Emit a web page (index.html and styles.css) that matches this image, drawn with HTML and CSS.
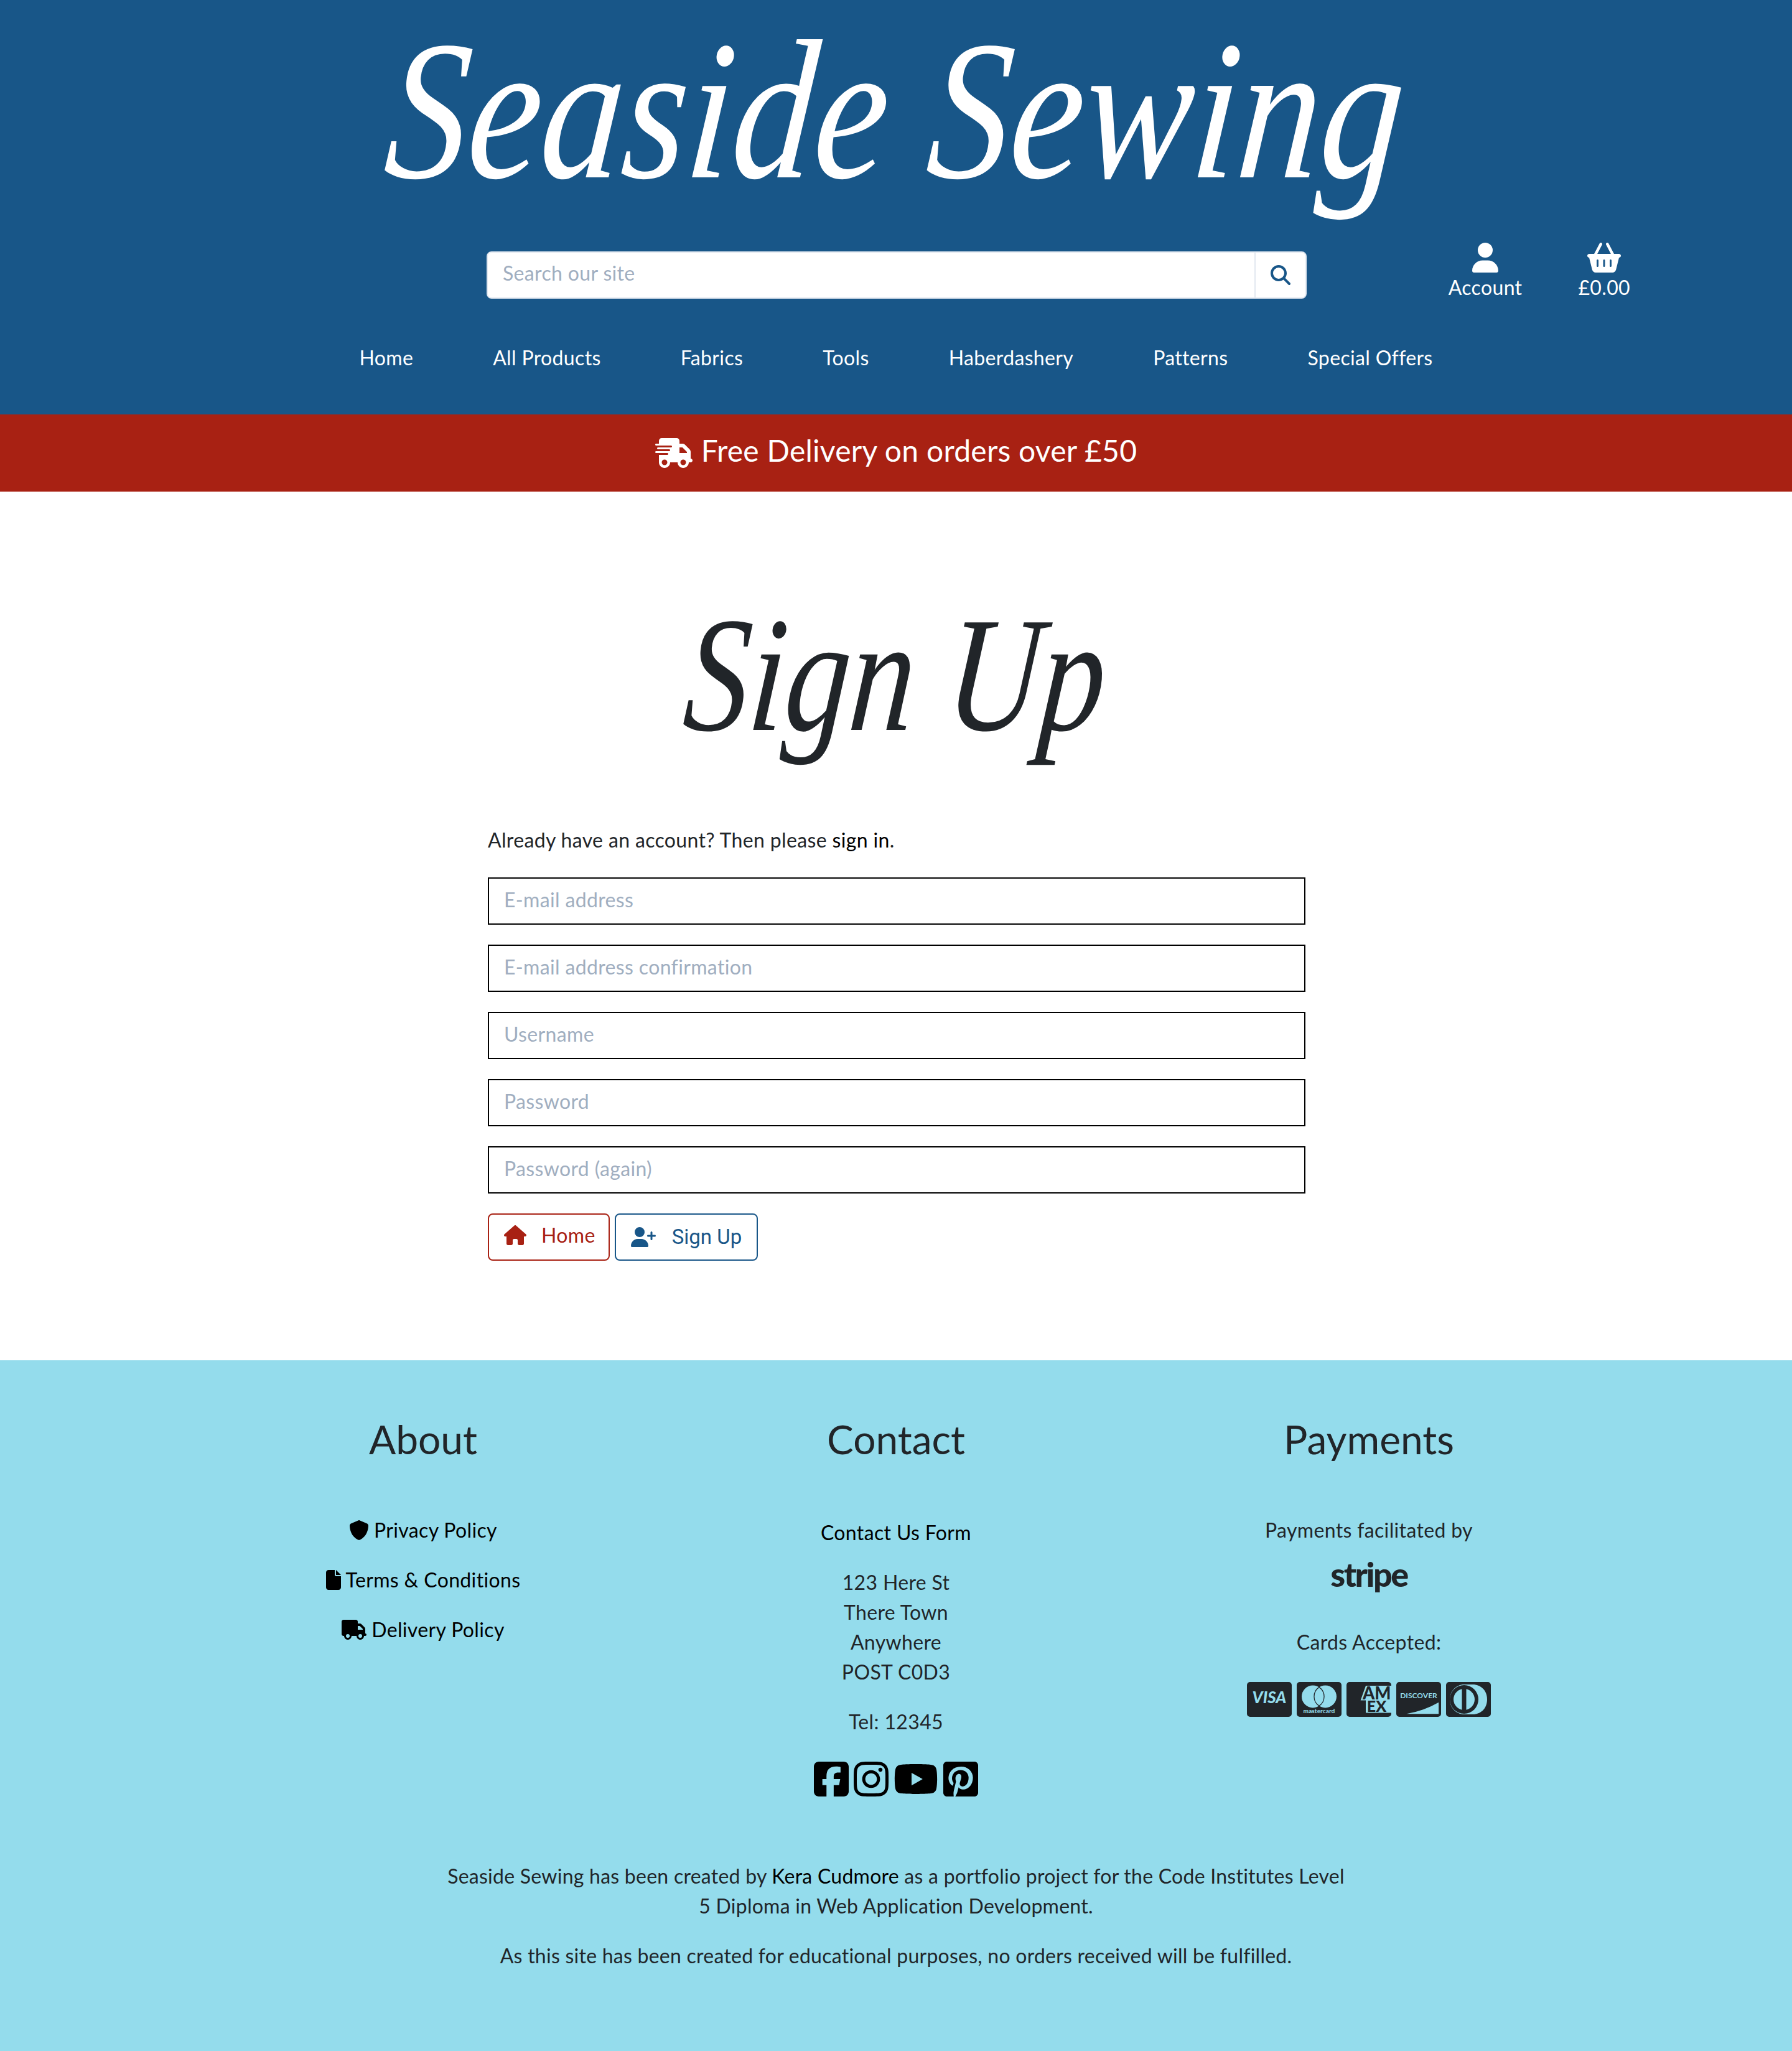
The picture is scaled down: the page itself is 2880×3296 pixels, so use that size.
FILE: index.html
```html
<!DOCTYPE html>
<html lang="en">

<head>
    <meta charset="UTF-8">
    <title>Seaside Sewing - Sign Up</title>
    <link rel="stylesheet" href="styles.css">
</head>

<body>
    <!-- icon sprite -->
    <svg class="sprite" width="0" height="0">
        <symbol id="i-search" viewBox="0 0 512 512"><path d="M416 208c0 45.9-14.9 88.3-40 122.7L502.6 457.4c12.5 12.5 12.5 32.8 0 45.3s-32.8 12.5-45.3 0L330.7 376c-34.4 25.2-76.8 40-122.7 40C93.1 416 0 322.9 0 208S93.1 0 208 0S416 93.1 416 208zM208 352a144 144 0 1 0 0-288 144 144 0 1 0 0 288z"/></symbol>
        <symbol id="i-user" viewBox="0 0 448 512"><path d="M224 256A128 128 0 1 0 224 0a128 128 0 1 0 0 256zm-45.7 48C79.8 304 0 383.8 0 482.3C0 498.7 13.3 512 29.7 512H418.3c16.4 0 29.7-13.3 29.7-29.7C448 383.8 368.2 304 269.7 304H178.3z"/></symbol>
        <symbol id="i-basket" viewBox="0 0 576 512"><path d="M253.3 35.1c6.1-11.8 1.5-26.3-10.2-32.4s-26.3-1.5-32.4 10.2L117.6 192H32c-17.7 0-32 14.3-32 32s14.3 32 32 32L83.9 463.5C91 492 116.6 512 146 512H430c29.4 0 55-20 62.1-48.5L544 256c17.7 0 32-14.3 32-32s-14.3-32-32-32H458.4L365.3 12.9C359.2 1.2 344.7-3.4 332.9 2.7s-16.3 20.6-10.2 32.4L404.3 192H171.7L253.3 35.1zM192 304v96c0 8.8-7.2 16-16 16s-16-7.2-16-16V304c0-8.8 7.2-16 16-16s16 7.2 16 16zm96-16c8.8 0 16 7.2 16 16v96c0 8.8-7.2 16-16 16s-16-7.2-16-16V304c0-8.8 7.2-16 16-16zm128 16v96c0 8.8-7.2 16-16 16s-16-7.2-16-16V304c0-8.8 7.2-16 16-16s16 7.2 16 16z"/></symbol>
        <symbol id="i-fast" viewBox="0 0 640 512"><path d="M112 0C85.5 0 64 21.5 64 48V96H16c-8.8 0-16 7.2-16 16s7.2 16 16 16H64 272c8.8 0 16 7.2 16 16s-7.2 16-16 16H64 48c-8.8 0-16 7.2-16 16s7.2 16 16 16H64 240c8.8 0 16 7.2 16 16s-7.2 16-16 16H64 16c-8.8 0-16 7.2-16 16s7.2 16 16 16H64 208c8.8 0 16 7.2 16 16s-7.2 16-16 16H64V416c0 53 43 96 96 96s96-43 96-96H384c0 53 43 96 96 96s96-43 96-96h32c17.7 0 32-14.3 32-32s-14.3-32-32-32V288 256 237.3c0-17-6.7-33.3-18.7-45.3L512 114.7c-12-12-28.3-18.7-45.3-18.7H416V48c0-26.5-21.5-48-48-48H112zM544 237.3V256H416V160h50.7L544 237.3zM160 368a48 48 0 1 1 0 96 48 48 0 1 1 0-96zm272 48a48 48 0 1 1 96 0 48 48 0 1 1 -96 0z"/></symbol>
        <symbol id="i-truck" viewBox="0 0 640 512"><path d="M48 0C21.5 0 0 21.5 0 48V368c0 26.5 21.5 48 48 48H64c0 53 43 96 96 96s96-43 96-96H384c0 53 43 96 96 96s96-43 96-96h32c17.7 0 32-14.3 32-32s-14.3-32-32-32V288 256 237.3c0-17-6.7-33.3-18.7-45.3L512 114.7c-12-12-28.3-18.7-45.3-18.7H416V48c0-26.5-21.5-48-48-48H48zM416 160h50.7L544 237.3V256H416V160zM112 416a48 48 0 1 1 96 0 48 48 0 1 1 -96 0zm368-48a48 48 0 1 1 0 96 48 48 0 1 1 0-96z"/></symbol>
        <symbol id="i-home" viewBox="0 0 576 512"><path d="M575.8 255.5c0 18-15 32.1-32 32.1h-32l.7 160.2c0 2.7-.2 5.4-.5 8.1V472c0 22.1-17.9 40-40 40H456c-1.1 0-2.2 0-3.3-.1c-1.4 .1-2.8 .1-4.2 .1H416 392c-22.1 0-40-17.9-40-40V448 384c0-17.7-14.3-32-32-32H256c-17.7 0-32 14.3-32 32v64 24c0 22.1-17.9 40-40 40H160 128.1c-1.5 0-3-.1-4.5-.2c-1.2 .1-2.4 .2-3.6 .2H104c-22.1 0-40-17.9-40-40V360c0-.9 0-1.9 .1-2.8V287.6H32c-18 0-32-14-32-32.1c0-9 3-17 10-24L266.4 8c7-7 15-8 22-8s15 2 21 7L564.8 231.5c8 7 12 15 11 24z"/></symbol>
        <symbol id="i-user-plus" viewBox="0 0 640 512"><path d="M96 128a128 128 0 1 1 256 0A128 128 0 1 1 96 128zM0 482.3C0 383.8 79.8 304 178.3 304h91.4C368.2 304 448 383.8 448 482.3c0 16.4-13.3 29.7-29.7 29.7H29.7C13.3 512 0 498.7 0 482.3zM504 312V248H440c-13.3 0-24-10.7-24-24s10.7-24 24-24h64V136c0-13.3 10.7-24 24-24s24 10.7 24 24v64h64c13.3 0 24 10.7 24 24s-10.7 24-24 24H552v64c0 13.3-10.7 24-24 24s-24-10.7-24-24z"/></symbol>
        <symbol id="i-shield" viewBox="0 0 512 512"><path d="M256 0c4.6 0 9.2 1 13.4 2.9L457.7 82.8c22 9.3 38.4 31 38.3 57.2c-.5 99.2-41.3 280.7-213.6 363.2c-16.7 8-36.1 8-52.8 0C57.3 420.7 16.5 239.2 16 140c-.1-26.2 16.3-47.9 38.3-57.2L242.7 2.9C246.8 1 251.4 0 256 0z"/></symbol>
        <symbol id="i-file" viewBox="0 0 384 512"><path d="M0 64C0 28.7 28.7 0 64 0H224V128c0 17.7 14.3 32 32 32H384V448c0 35.3-28.7 64-64 64H64c-35.3 0-64-28.7-64-64V64zm384 64H256V0L384 128z"/></symbol>
        <symbol id="i-facebook" viewBox="0 0 448 512"><path d="M64 32C28.7 32 0 60.7 0 96V416c0 35.3 28.7 64 64 64h98.2V334.2H109.4V256h52.8V222.3c0-87.1 39.4-127.5 125-127.5c16.2 0 44.2 3.2 55.7 6.4V172c-6-.6-16.5-1-29.6-1c-42 0-58.2 15.9-58.2 57.2V256h83.6l-14.4 78.2H255V480H384c35.3 0 64-28.7 64-64V96c0-35.3-28.7-64-64-64H64z"/></symbol>
        <symbol id="i-instagram" viewBox="0 0 448 512"><path d="M224.1 141c-63.6 0-114.9 51.3-114.9 114.9s51.3 114.9 114.9 114.9S339 319.5 339 255.9 287.7 141 224.1 141zm0 189.6c-41.1 0-74.7-33.5-74.7-74.7s33.5-74.7 74.7-74.7 74.7 33.5 74.7 74.7-33.6 74.7-74.7 74.7zm146.4-194.3c0 14.9-12 26.8-26.8 26.8-14.9 0-26.8-12-26.8-26.8s12-26.8 26.8-26.8 26.8 12 26.8 26.8zm76.1 27.2c-1.7-35.9-9.9-67.7-36.2-93.9-26.2-26.2-58-34.4-93.9-36.2-37-2.1-147.9-2.1-184.9 0-35.8 1.7-67.6 9.9-93.9 36.1s-34.4 58-36.2 93.9c-2.1 37-2.1 147.9 0 184.9 1.7 35.9 9.9 67.7 36.2 93.9s58 34.4 93.9 36.2c37 2.1 147.9 2.1 184.9 0 35.9-1.7 67.7-9.9 93.9-36.2 26.2-26.2 34.4-58 36.2-93.9 2.1-37 2.1-147.8 0-184.8zM398.8 388c-7.8 19.6-22.9 34.7-42.6 42.6-29.5 11.7-99.5 9-132.1 9s-102.7 2.6-132.1-9c-19.6-7.8-34.7-22.9-42.6-42.6-11.7-29.5-9-99.5-9-132.1s-2.6-102.7 9-132.1c7.8-19.6 22.9-34.7 42.6-42.6 29.5-11.7 99.5-9 132.1-9s102.7-2.6 132.1 9c19.6 7.8 34.7 22.9 42.6 42.6 11.7 29.5 9 99.5 9 132.1s2.7 102.7-9 132.1z"/></symbol>
        <symbol id="i-youtube" viewBox="0 0 576 512"><path d="M549.655 124.083c-6.281-23.65-24.787-42.276-48.284-48.597C458.781 64 288 64 288 64S117.22 64 74.629 75.486c-23.497 6.322-42.003 24.947-48.284 48.597-11.412 42.867-11.412 132.305-11.412 132.305s0 89.438 11.412 132.305c6.281 23.65 24.787 41.5 48.284 47.821C117.22 448 288 448 288 448s170.78 0 213.371-11.486c23.497-6.321 42.003-24.171 48.284-47.821 11.412-42.867 11.412-132.305 11.412-132.305s0-89.438-11.412-132.305zm-317.51 213.508V175.185l142.739 81.205-142.739 81.201z"/></symbol>
        <symbol id="i-pinterest" viewBox="0 0 448 512"><path d="M448 80v352c0 26.5-21.5 48-48 48H154.4c9.8-16.4 22.4-40 27.4-59.3 3-11.5 15.3-58.4 15.3-58.4 8 15.3 31.4 28.2 56.3 28.2 74.1 0 127.4-68.1 127.4-152.7 0-81.1-66.2-141.8-151.4-141.8-106 0-162.2 71.1-162.2 148.6 0 36 19.2 80.8 49.8 95.1 4.7 2.2 7.1 1.2 8.2-3.3.8-3.4 5-20.1 6.8-27.8.6-2.5.3-4.6-1.7-7-10.1-12.3-18.3-34.9-18.3-56 0-54.2 41-106.6 110.9-106.6 60.3 0 102.6 41.1 102.6 99.9 0 66.4-33.5 112.4-77.2 112.4-24.1 0-42.1-19.9-36.4-44.4 6.9-29.2 20.3-60.7 20.3-81.8 0-53-75.5-45.7-75.5 25 0 21.7 7.3 36.5 7.3 36.5-31.4 132.8-36.1 134.5-29.6 192.6l2.2.8H48c-26.5 0-48-21.5-48-48V80c0-26.5 21.5-48 48-48h352c26.5 0 48 21.5 48 48z"/></symbol>
    </svg>

    <header class="site-header">
        <h1 class="logo"><span class="script">Seaside Sewing</span></h1>
        <div class="search-row">
            <form class="search">
                <input class="search-input" type="text" placeholder="Search our site">
                <button class="search-btn" type="button">
                    <svg class="search-icon"><use href="#i-search"/></svg>
                </button>
            </form>
            <div class="header-links">
                <a class="header-link" href="#"><svg class="hl-icon user"><use href="#i-user"/></svg>Account</a>
                <a class="header-link" href="#"><svg class="hl-icon basket"><use href="#i-basket"/></svg>£0.00</a>
            </div>
        </div>
        <nav class="main-nav">
            <a href="#">Home</a>
            <a href="#">All Products</a>
            <a href="#">Fabrics</a>
            <a href="#">Tools</a>
            <a href="#">Haberdashery</a>
            <a href="#">Patterns</a>
            <a href="#">Special Offers</a>
        </nav>
    </header>

    <div class="banner">
        <svg class="banner-icon"><use href="#i-fast"/></svg>
        <span>Free Delivery on orders over £50</span>
    </div>

    <main class="signup">
        <h2 class="page-title"><span class="script">Sign Up</span></h2>
        <div class="signup-form">
            <p class="lead">Already have an account? Then please <a href="#">sign in</a>.</p>
            <input class="field" type="email" placeholder="E-mail address">
            <input class="field" type="email" placeholder="E-mail address confirmation">
            <input class="field" type="text" placeholder="Username">
            <input class="field" type="password" placeholder="Password">
            <input class="field" type="password" placeholder="Password (again)">
            <div class="actions">
                <a class="btn btn-red" href="#"><svg class="btn-icon home"><use href="#i-home"/></svg>Home</a>
                <a class="btn btn-blue" href="#"><svg class="btn-icon add"><use href="#i-user-plus"/></svg>Sign Up</a>
            </div>
        </div>
    </main>

    <footer class="site-footer">
        <div class="footer-cols">
            <section class="col">
                <h3>About</h3>
                <ul class="policy-list">
                    <li><a href="#"><svg class="ico shield"><use href="#i-shield"/></svg>Privacy Policy</a></li>
                    <li><a href="#"><svg class="ico file"><use href="#i-file"/></svg>Terms &amp; Conditions</a></li>
                    <li><a href="#"><svg class="ico truck"><use href="#i-truck"/></svg>Delivery Policy</a></li>
                </ul>
            </section>
            <section class="col">
                <h3>Contact</h3>
                <div class="contact-wrap">
                    <a class="contact-link" href="#">Contact Us Form</a>
                    <p class="address">123 Here St<br>There Town<br>Anywhere<br>POST C0D3</p>
                    <p>Tel: 12345</p>
                    <div class="social">
                        <a href="#"><svg class="soc sq"><use href="#i-facebook"/></svg></a>
                        <a href="#"><svg class="soc sq"><use href="#i-instagram"/></svg></a>
                        <a href="#"><svg class="soc wide"><use href="#i-youtube"/></svg></a>
                        <a href="#"><svg class="soc sq"><use href="#i-pinterest"/></svg></a>
                    </div>
                </div>
            </section>
            <section class="col">
                <h3>Payments</h3>
                <p>Payments facilitated by</p>
                <div class="stripe">stripe</div>
                <p>Cards Accepted:</p>
                <div class="cards">
                    <svg class="card" viewBox="0 0 576 448"><rect width="576" height="448" rx="40"/><text class="c-visa" x="288" y="270" text-anchor="middle">VISA</text></svg>
                    <svg class="card" viewBox="0 0 576 448"><rect width="576" height="448" rx="40"/><circle class="c-light" cx="208" cy="187" r="144"/><circle class="c-light" cx="368" cy="187" r="144"/><path class="c-lens" d="M288 67a144 144 0 0 1 0 240a144 144 0 0 1 0-240z"/><text class="c-mc" x="288" y="400" text-anchor="middle">mastercard</text></svg>
                    <svg class="card" viewBox="0 0 576 448"><rect width="576" height="448" rx="40"/><path class="c-light" d="M181 235L248 48H576V395H248V235z"/><text class="c-amex" x="208" y="221">AM</text><text class="c-amex ex" x="262" y="381">EX</text></svg>
                    <svg class="card" viewBox="0 0 576 448"><rect width="576" height="448" rx="40"/><text class="c-disc" x="288" y="210" text-anchor="middle">DISCOVER</text><path class="c-light" d="M130 410Q360 370 545 262V410z"/></svg>
                    <svg class="card" viewBox="0 0 576 448"><rect width="576" height="448" rx="40"/><path class="c-light" d="M232 32h112c98 0 184 72 184 192s-86 192-184 192H232C130 416 48 330 48 224S130 32 232 32z"/><circle cx="232" cy="224" r="184" class="c-ring"/><circle class="c-light" cx="232" cy="224" r="136"/><rect x="204" y="76" width="56" height="296"/></svg>
                </div>
            </section>
        </div>
        <div class="disclaimer">
            <p>Seaside Sewing has been created by <a href="#">Kera Cudmore</a> as a portfolio project for the Code Institutes Level 5 Diploma in Web Application Development.</p>
            <p>As this site has been created for educational purposes, no orders received will be fulfilled.</p>
        </div>
    </footer>
</body>

</html>
```

FILE: styles.css
```css
* {
    box-sizing: border-box;
}

body {
    margin: 0;
    font-family: Lato, "Open Sans", sans-serif;
    font-size: 32px;
    line-height: 48px;
    letter-spacing: 0.35px;
    color: #212529;
    background: #fff;
}

a {
    color: #000;
    text-decoration: none;
}

p {
    margin: 0;
}

.sprite {
    position: absolute;
}

svg {
    fill: currentColor;
}

/* Script headings, tall and narrow like the site's handwriting face */
.script {
    display: inline-block;
    font-family: "Liberation Serif", serif;
    font-style: italic;
    font-weight: 400;
    letter-spacing: 0;
    white-space: nowrap;
    transform: scaleX(0.787) skewX(-6deg);
}

/* Header */
.site-header {
    height: 666px;
    background: #185688;
    color: #fff;
    display: flex;
    flex-direction: column;
}

.logo {
    margin: 0;
    height: 390px;
    text-align: center;
    font-family: "Liberation Serif", serif;
    font-size: 320px;
    line-height: 355px;
    font-weight: 400;
}

.logo .script {
    transform: scaleX(0.824) skewX(-6deg);
}

.search-row {
    display: grid;
    grid-template-columns: 782px 1318px 1fr;
    align-items: center;
    height: 96px;
}

.search {
    grid-column: 2;
    display: flex;
    height: 76px;
    margin-top: 8px;
    background: #fff;
    border: 2px solid #e2e8f0;
    border-radius: 8px;
}

.search-input {
    flex: 1;
    border: 0;
    outline: 0;
    background: none;
    padding: 0 24px 6px;
    font: inherit;
    letter-spacing: 0.35px;
    border-radius: 8px;
}

.search-input::placeholder,
.field::placeholder {
    color: #a0aec0;
    opacity: 1;
}

.search-btn {
    width: 82px;
    padding: 0;
    border: 0;
    border-left: 2px solid #e2e8f0;
    background: none;
    display: flex;
    align-items: center;
    justify-content: center;
}

.search-icon {
    width: 32px;
    height: 32px;
    color: #185688;
}

.header-links {
    display: flex;
    justify-content: flex-end;
    gap: 90px;
    padding-right: 260px;
}

.header-link {
    color: #fff;
    display: flex;
    flex-direction: column;
    align-items: center;
}

.hl-icon {
    height: 48px;
}

.hl-icon.user {
    width: 42px;
}

.hl-icon.basket {
    width: 54px;
}

.main-nav {
    margin-top: 65px;
    display: flex;
    justify-content: center;
    gap: 128px;
}

.main-nav a {
    color: #fff;
}

/* Delivery banner */
.banner {
    height: 124px;
    background: #a82113;
    color: #fff;
    display: flex;
    align-items: center;
    justify-content: center;
    gap: 14px;
    font-size: 48px;
    letter-spacing: 0.25px;
}

.banner span {
    padding-bottom: 8px;
}

.banner-icon {
    width: 60px;
    height: 48px;
}

/* Sign up form */
.signup {
    height: 1396px;
    display: flex;
    flex-direction: column;
    align-items: center;
}

.page-title {
    margin: 0;
    height: 536px;
    padding-top: 170px;
    font-size: 264px;
    line-height: 222px;
    font-weight: 400;
}

.signup-form {
    width: 1314px;
    margin-left: 2px;
    display: flex;
    flex-direction: column;
    gap: 32px;
}

.lead {
    margin-bottom: 4px;
    padding-top: 2px;
    margin-top: -2px;
}

.field {
    height: 76px;
    border: 2px solid #000;
    padding: 0 24px 6px;
    font: inherit;
    letter-spacing: 0.35px;
    background: #fff;
    outline: 0;
}

.actions {
    display: flex;
    gap: 8px;
}

.btn {
    height: 76px;
    display: flex;
    align-items: center;
    gap: 26px;
    border: 2px solid;
    border-radius: 8px;
}

.btn-red {
    padding: 0 21px 6px 24px;
    color: #a82113;
    gap: 24px;
}

.btn-blue {
    padding: 0 24px 0 24px;
    color: #185688;
    font-family: Roboto, sans-serif;
    font-size: 33px;
    letter-spacing: 0;
}

.btn-icon {
    height: 32px;
}

.btn-icon.home {
    width: 36px;
}

.btn-icon.add {
    width: 40px;
}

/* Footer */
.site-footer {
    height: 1110px;
    background: #94dcec;
    padding-top: 88px;
}

.footer-cols {
    width: 2280px;
    margin: 0 auto;
    display: grid;
    grid-template-columns: repeat(3, 1fr);
    text-align: center;
}

.col h3 {
    margin: 0 0 84px;
    font-size: 64px;
    font-weight: 400;
    line-height: 77px;
    letter-spacing: 0;
}

.policy-list {
    margin: 0;
    padding: 0;
    list-style: none;
    display: flex;
    flex-direction: column;
    gap: 32px;
}

.ico {
    height: 32px;
    margin-right: 8px;
    vertical-align: -4px;
}

.ico.shield {
    width: 32px;
}

.ico.file {
    width: 24px;
}

.ico.truck {
    width: 40px;
}

.contact-wrap {
    padding-top: 4px;
}

.contact-link {
    display: block;
    margin-bottom: 32px;
}

.address {
    margin-bottom: 32px;
}

.social {
    margin-top: 40px;
    display: flex;
    justify-content: center;
    align-items: center;
    gap: 8px;
    height: 56px;
}

.social a {
    display: flex;
}

.soc {
    height: 64px;
}

.soc.sq {
    width: 56px;
}

.soc.wide {
    width: 72px;
}

.stripe {
    margin-top: 22px;
    margin-bottom: 60px;
    height: 50px;
    font-size: 54px;
    line-height: 50px;
    font-weight: 900;
    letter-spacing: -2.5px;
}

.cards {
    margin-top: 40px;
    display: flex;
    justify-content: center;
    gap: 8px;
}

.card {
    width: 72px;
    height: 56px;
    fill: #212529;
}

.c-light {
    fill: #94dcec;
}

.c-lens {
    fill: #94dcec;
    stroke: #212529;
    stroke-width: 10;
}

.c-ring {
    fill: #212529;
}

.c-visa {
    fill: #94dcec;
    font: italic 900 208px Lato, sans-serif;
}

.c-mc {
    fill: #94dcec;
    font: 700 82px Lato, sans-serif;
    letter-spacing: 0;
}

.c-amex {
    fill: #212529;
    font: 900 220px Lato, sans-serif;
}

.c-amex.ex {
    font-size: 200px;
}

.c-disc {
    fill: #94dcec;
    font: 700 96px Lato, sans-serif;
}

.disclaimer {
    width: 1455px;
    margin: 104px auto 0;
    text-align: center;
    letter-spacing: 0.25px;
    display: flex;
    flex-direction: column;
    gap: 32px;
}
```
